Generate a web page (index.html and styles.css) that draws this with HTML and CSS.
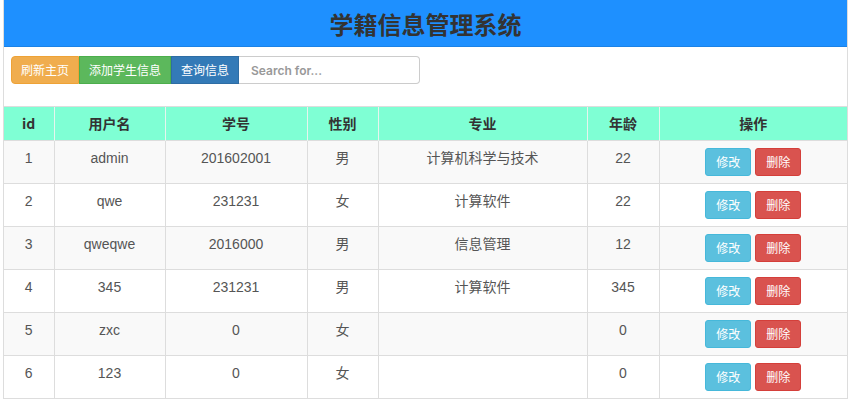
FILE: index.html
```html
<!DOCTYPE html>
<html lang="zh-CN">
<head>
  <meta charset="UTF-8">
  <title>学籍信息管理系统</title>
  <link rel="stylesheet" href="styles.css">
</head>
<body>

<div class="wrap">
  <div class="banner">
    <h1>学籍信息管理系统</h1>
  </div>

  <div class="toolbar">
    <div class="input-group">
      <button type="button" class="btn btn-warning">刷新主页</button><button type="button" class="btn btn-success">添加学生信息</button><button type="button" class="btn btn-primary">查询信息</button><input type="text" class="search" placeholder="Search for...">
    </div>
  </div>

  <table class="table">
    <colgroup>
      <col class="c-id"><col class="c-user"><col class="c-num"><col class="c-sex"><col class="c-major"><col class="c-age"><col class="c-op">
    </colgroup>
    <thead>
      <tr><th>id</th><th>用户名</th><th>学号</th><th>性别</th><th>专业</th><th>年龄</th><th>操作</th></tr>
    </thead>
    <tbody>
      <tr><td>1</td><td>admin</td><td>201602001</td><td>男</td><td>计算机科学与技术</td><td>22</td>
        <td><button class="btn btn-info">修改</button> <button class="btn btn-danger">删除</button></td></tr>
      <tr><td>2</td><td>qwe</td><td>231231</td><td>女</td><td>计算软件</td><td>22</td>
        <td><button class="btn btn-info">修改</button> <button class="btn btn-danger">删除</button></td></tr>
      <tr><td>3</td><td>qweqwe</td><td>2016000</td><td>男</td><td>信息管理</td><td>12</td>
        <td><button class="btn btn-info">修改</button> <button class="btn btn-danger">删除</button></td></tr>
      <tr><td>4</td><td>345</td><td>231231</td><td>男</td><td>计算软件</td><td>345</td>
        <td><button class="btn btn-info">修改</button> <button class="btn btn-danger">删除</button></td></tr>
      <tr><td>5</td><td>zxc</td><td>0</td><td>女</td><td></td><td>0</td>
        <td><button class="btn btn-info">修改</button> <button class="btn btn-danger">删除</button></td></tr>
      <tr><td>6</td><td>123</td><td>0</td><td>女</td><td></td><td>0</td>
        <td><button class="btn btn-info">修改</button> <button class="btn btn-danger">删除</button></td></tr>
    </tbody>
  </table>
</div>

</body>
</html>
```

FILE: styles.css
```css
body { margin: 0 1px 0 3px; font-family: "Liberation Sans", "Noto Sans CJK SC", sans-serif; font-size: 14px; color: #555; }
.wrap { border: 1px solid #ddd; border-top: none; }
.banner { background-color: #1e90ff; height: 46px; border-bottom: 1px solid #1b82e6; display: flex; align-items: center; justify-content: center; }
.banner h1 { margin: 0; font-family: "Noto Sans CJK SC", sans-serif; font-size: 24px; font-weight: bold; color: #333; }
.toolbar { padding: 9px 7px 22px; border-bottom: 1px solid #ddd; }
.input-group { display: flex; width: 409px; height: 28px; }
.btn { font-family: "Noto Sans CJK SC", sans-serif; font-size: 12px; line-height: 18px; padding: 4px 10px; color: #fff; border: 1px solid transparent; border-radius: 3px; cursor: pointer; white-space: nowrap; }
.input-group .btn { flex-shrink: 0; border-radius: 0; height: 28px; padding: 0 9px; }
.input-group .btn:first-child { border-radius: 4px 0 0 4px; }
.btn-warning { background-color: #f0ad4e; border-color: #eea236; }
.btn-success { background-color: #5cb85c; border-color: #4cae4c; }
.btn-primary { background-color: #337ab7; border-color: #2e6da4; }
.btn-info { background-color: #5bc0de; border-color: #46b8da; }
.btn-danger { background-color: #d9534f; border-color: #d43f3a; }
.search { flex: 1; min-width: 0; height: 28px; box-sizing: border-box; border: 1px solid #ccc; border-left: none; border-radius: 0 4px 4px 0; padding: 0 12px; font-family: Inter, sans-serif; font-size: 12px; font-weight: 600; color: #555; }
.search::placeholder { color: #999; }
.table { width: 100%; border-collapse: collapse; table-layout: fixed; }
.c-id { width: 50px; } .c-user { width: 111px; } .c-num { width: 142px; } .c-sex { width: 71px; }
.c-major { width: 209px; } .c-age { width: 72px; } .c-op { width: auto; }
.table th { background-color: #7fffd4; color: #333; font-family: "Noto Sans CJK SC", sans-serif; font-weight: bold; font-size: 14px; line-height: 20px; padding: 6px 8px 7px; border-left: 1px solid #e6f5ee; }
.table th:first-child, .table td:first-child { border-left: none; }
.table td { text-align: center; vertical-align: top; line-height: 20px; padding: 7px 8px; border-top: 1px solid #ddd; border-left: 1px solid #ddd; height: 28px; }
.table tbody tr:nth-child(odd) { background-color: #f9f9f9; }
.table td .btn { height: 28px; vertical-align: top; }
```
